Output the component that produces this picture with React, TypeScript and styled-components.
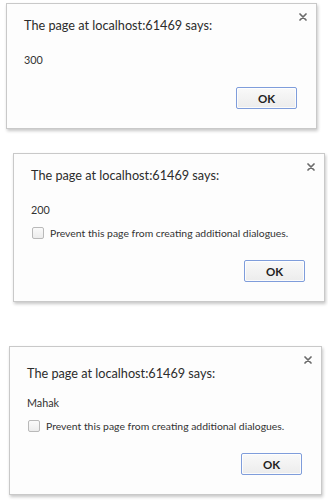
import styled, { createGlobalStyle } from 'styled-components'

const GlobalStyle = createGlobalStyle`
  html, body {
    margin: 0;
    padding: 0;
    background: #ffffff;
  }
  body {
    font-family: Lato, 'Noto Sans', sans-serif;
    color: #333;
  }
`

type DialogProps = {
  message: string
  withCheckbox?: boolean
  left: number
  top: number
  width: number
  titleShift?: number
}

const AlertDialog = ({ message, withCheckbox, left, top, width, titleShift = 0 }: DialogProps) => {
  return (
    <Dialog $left={left} $top={top} $width={width}>
      <Header>
        <Title $shift={titleShift}>The page at localhost:61469 says:</Title>
        <CloseButton aria-label="Close">
          <svg width="8" height="8" viewBox="0 0 8 8">
            <path d="M1 1L7 7M7 1L1 7" stroke="#6b6b6b" strokeWidth="1.7" strokeLinecap="round" />
          </svg>
        </CloseButton>
      </Header>
      <Message>{message}</Message>
      {withCheckbox && (
        <CheckRow>
          <Checkbox />
          <span>Prevent this page from creating additional dialogues.</span>
        </CheckRow>
      )}
      <Footer>
        <OkButton>OK</OkButton>
      </Footer>
    </Dialog>
  )
}

export default function App() {
  return (
    <>
      <GlobalStyle />
      <Page>
        <AlertDialog message="300" left={6} top={3} width={311} />
        <AlertDialog message="200" withCheckbox left={13} top={24} width={312} />
        <AlertDialog message="Mahak" withCheckbox left={9} top={44} width={313} titleShift={5} />
      </Page>
    </>
  )
}

const Page = styled.div`
  display: flex;
  flex-direction: column;
  align-items: flex-start;
  width: 328px;
  height: 503px;
  overflow: hidden;
`

const Dialog = styled.div<{ $left: number; $top: number; $width: number }>`
  box-sizing: border-box;
  width: ${(p) => p.$width}px;
  margin-left: ${(p) => p.$left}px;
  margin-top: ${(p) => p.$top}px;
  padding: 12px 19px 19px 17px;
  background: #fdfdfd;
  border: 1px solid #c9c9c9;
  box-shadow: 1px 2px 3px rgba(0, 0, 0, 0.22);
  display: flex;
  flex-direction: column;
`

const Header = styled.div`
  display: flex;
  justify-content: space-between;
  align-items: flex-start;
  height: 18px;
  margin-right: -10px;
`

const Title = styled.div<{ $shift: number }>`
  font-size: 12.7px;
  line-height: 18px;
  color: #2c2c2c;
  white-space: nowrap;
  transform: translateY(${(p) => p.$shift}px);
`

const CloseButton = styled.div`
  width: 8px;
  height: 8px;
  margin-top: -3px;
  display: flex;
`

const Message = styled.div`
  margin-top: 19px;
  font-size: 10.8px;
  line-height: 14px;
  color: #333;
`

const CheckRow = styled.label`
  margin-top: 9px;
  margin-left: 1px;
  display: flex;
  align-items: center;
  gap: 6px;
  font-size: 10.4px;
  line-height: 14px;
  color: #333;
  white-space: nowrap;
`

const Checkbox = styled.span`
  flex-shrink: 0;
  box-sizing: border-box;
  width: 12px;
  height: 12px;
  border: 1px solid #b9b9b9;
  border-radius: 2px;
  background: linear-gradient(#fafafa, #ececec);
`

const Footer = styled.div`
  margin-top: 20px;
  display: flex;
  justify-content: flex-end;
`

const OkButton = styled.button`
  box-sizing: border-box;
  width: 61px;
  height: 22px;
  padding: 0;
  border: 1px solid #7f9ddb;
  border-radius: 2px;
  background: linear-gradient(#f9f9f9, #ececec);
  font-family: Lato, 'Noto Sans', sans-serif;
  font-weight: 700;
  font-size: 11.5px;
  color: #222;
  box-shadow: inset 0 0 0 1px rgba(255, 255, 255, 0.8);
`
